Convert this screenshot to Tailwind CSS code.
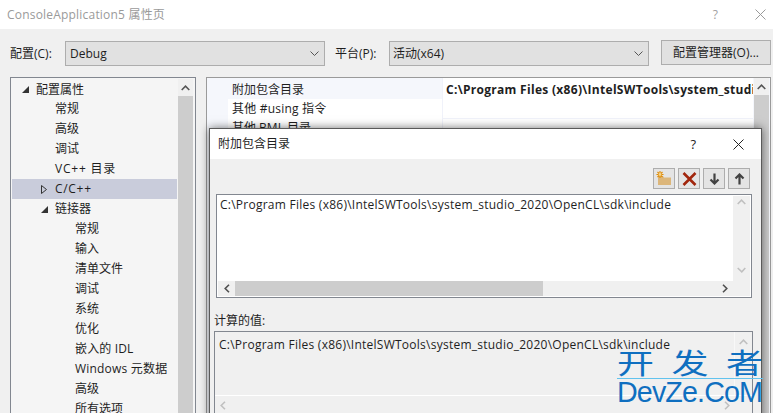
<!DOCTYPE html>
<html lang="zh">
<head>
<meta charset="utf-8">
<script src="https://cdn.jsdelivr.net/npm/@tailwindcss/browser@4"></script>
</head>
<body class="m-0">
<div class="relative w-[773px] h-[413px] overflow-hidden bg-[#f0f0f0] text-[12px] text-[#1e1e1e] font-['Open_Sans','Noto_Sans_CJK_SC',sans-serif]">

  <!-- title bar -->
  <div class="h-[29px] bg-white flex items-center justify-between pl-[7px] pr-[7px]">
    <span class="text-[#9a9a9a] text-[12px] leading-none tracking-[0.2px]">ConsoleApplication5 属性页</span>
    <div class="flex items-center gap-[37px]">
      <span class="text-[#a0a0a0] text-[12px] leading-none">?</span>
      <svg class="w-[11px] h-[11px]" viewBox="0 0 11 11"><path d="M.5 .5L10.5 10.5M10.5 .5L.5 10.5" stroke="#9a9a9a" stroke-width="1" fill="none"/></svg>
    </div>
  </div>

  <!-- config row -->
  <div class="h-[48px] flex items-start pt-[12px] pl-[10px]">
    <span class="w-[55px] leading-[25px]">配置(C):</span>
    <div class="w-[260px] h-[25px] border border-[#adadad] bg-[#e1e1e1] flex items-center justify-between pl-[4px] pr-[4px]">
      <span class="text-[12px]">Debug</span>
      <svg class="w-[9px] h-[6px] mr-[1px]" viewBox="0 0 9 6"><path d="M.5 .5L4.5 4.5L8.5 .5" stroke="#555" fill="none"/></svg>
    </div>
    <span class="w-[64px] pl-[10px] leading-[25px] box-border">平台(P):</span>
    <div class="w-[260px] h-[25px] border border-[#adadad] bg-[#e1e1e1] flex items-center justify-between pl-[3px] pr-[4px]">
      <span>活动(x64)</span>
      <svg class="w-[9px] h-[6px] mr-[1px]" viewBox="0 0 9 6"><path d="M.5 .5L4.5 4.5L8.5 .5" stroke="#555" fill="none"/></svg>
    </div>
    <div class="ml-[12px] -mt-[1px] w-[110px] h-[25px] border border-[#adadad] bg-[#e1e1e1] flex items-center justify-center">配置管理器(O)...</div>
  </div>

  <!-- panels -->
  <div class="flex items-start pl-[10px]">
    <!-- tree -->
    <div class="w-[186px] h-[340px] border border-[#828790] bg-[#f5f5f5] flex p-[1px] overflow-hidden">
      <div class="w-[165px] shrink-0 leading-[19px]">
        <div class="flex items-center h-[20px] pl-[10px] gap-[7px]">
          <svg class="w-[7px] h-[7px]" viewBox="0 0 7 7"><path d="M7 0V7H0Z" fill="#333"/></svg><span>配置属性</span>
        </div>
        <div class="h-[20px] pl-[43px]">常规</div>
        <div class="h-[20px] pl-[43px]">高级</div>
        <div class="h-[20px] pl-[43px]">调试</div>
        <div class="h-[20px] pl-[43px] tracking-[0.8px]">VC++ 目录</div>
        <div class="flex items-center h-[20px] pl-[29px] gap-[6px] bg-[#c9ccdb]">
          <svg class="w-[6px] h-[9px]" viewBox="0 0 6 9"><path d="M.5 .5L5.5 4.5L.5 8.5Z" fill="none" stroke="#333"/></svg><span class="ml-[2px] -mt-[2px] tracking-[0.7px]">C/C++</span>
        </div>
        <div class="flex items-center h-[20px] pl-[29px] gap-[7px]">
          <svg class="w-[7px] h-[7px]" viewBox="0 0 7 7"><path d="M7 0V7H0Z" fill="#333"/></svg><span class="-mt-[2px]">链接器</span>
        </div>
        <div class="h-[20px] pl-[63px]">常规</div>
        <div class="h-[20px] pl-[63px]">输入</div>
        <div class="h-[20px] pl-[63px]">清单文件</div>
        <div class="h-[20px] pl-[63px]">调试</div>
        <div class="h-[20px] pl-[63px]">系统</div>
        <div class="h-[20px] pl-[63px]">优化</div>
        <div class="h-[20px] pl-[63px] tracking-[0.15px]">嵌入的 IDL</div>
        <div class="h-[20px] pl-[63px] tracking-[0.2px]">Windows 元数据</div>
        <div class="h-[20px] pl-[63px]">高级</div>
        <div class="h-[20px] pl-[63px]">所有选项</div>
      </div>
      <div class="w-[15px] ml-[1px] shrink-0 flex flex-col">
        <div class="h-[17px] bg-[#f0f0f0] flex items-center justify-center">
          <svg class="w-[9px] h-[6px]" viewBox="0 0 9 6"><path d="M.7 5L4.5 1.2L8.3 5" stroke="#555" stroke-width="1.6" fill="none"/></svg>
        </div>
        <div class="flex-1 bg-[#cdcdcd]"></div>
      </div>
    </div>

    <!-- property grid -->
    <div class="ml-[10px] w-[565px] h-[340px] border border-[#9a9a9a] bg-[#f5f7fc] flex overflow-hidden">
      <div class="w-[21px] shrink-0"></div>
      <div class="w-[214px] shrink-0 leading-[19px]">
        <div class="h-[20px] pl-[4px] mt-[1px] leading-[22px]">附加包含目录</div>
        <div class="h-[19px] pl-[4px] bg-white leading-[20px] tracking-[0.2px]">其他 #using 指令</div>
        <div class="h-[19px] pl-[4px] bg-white">其他 BML 目录</div>
      </div>
      <div class="flex-1 border-l border-[#f0f2fa] min-w-0">
        <div class="h-[21px] bg-white font-bold leading-[23px] whitespace-nowrap overflow-hidden pl-[3px] text-[12px] tracking-[0.3px]">C:\Program Files (x86)\IntelSWTools\system_studio_2020\OpenCL\sdk\include</div>
        <div class="h-[19px] bg-white"></div>
        <div class="h-[19px] bg-white border-t border-[#f0f2fa]"></div>
      </div>
      <div class="w-[15px] ml-[1px] mr-[1px] shrink-0 flex flex-col">
        <div class="h-[17px] bg-[#f0f0f0] flex items-center justify-center">
          <svg class="w-[9px] h-[6px]" viewBox="0 0 9 6"><path d="M.7 5L4.5 1.2L8.3 5" stroke="#555" stroke-width="1.6" fill="none"/></svg>
        </div>
        <div class="flex-1 bg-[#cdcdcd]"></div>
      </div>
    </div>
  </div>

  <!-- dialog -->
  <div class="absolute left-[209px] top-[128px] w-[553px] h-[300px] border border-[#5a5a5a] bg-[#f0f0f0] shadow-[0_0_9px_rgba(0,0,0,0.55)]">
    <div class="h-[30px] bg-white flex items-center justify-between pl-[8px] pr-[17px]">
      <span>附加包含目录</span>
      <div class="flex items-center gap-[37px]">
        <span class="text-[13px] leading-none text-[#222]">?</span>
        <svg class="w-[11px] h-[11px]" viewBox="0 0 11 11"><path d="M.5 .5L10.5 10.5M10.5 .5L.5 10.5" stroke="#222" fill="none"/></svg>
      </div>
    </div>

    <!-- toolbar -->
    <div class="flex justify-end gap-[3px] pt-[9px] pr-[11px] h-[35px]">
      <div class="w-[22px] h-[21px] border border-[#adadad] bg-[#e4e4e4] flex items-center justify-center">
        <svg class="w-[16px] h-[15px]" viewBox="0 0 16 15">
          <path d="M2 5H7L8 6.5H15V14H2Z" fill="#dcb67a"/>
          <path d="M4 0V7M.5 3.5H7.5M1.5 1L6.5 6M6.5 1L1.5 6" stroke="#e08a00" stroke-width="1.1"/>
          <circle cx="4" cy="3.5" r="1.4" fill="#f5d58a"/>
        </svg>
      </div>
      <div class="w-[22px] h-[21px] border border-[#adadad] bg-[#e4e4e4] flex items-center justify-center">
        <svg class="w-[15px] h-[14px]" viewBox="0 0 15 14"><path d="M1.5 1L13.5 13M13.5 1L1.5 13" stroke="#a1260d" stroke-width="2.6" fill="none"/></svg>
      </div>
      <div class="w-[22px] h-[21px] border border-[#adadad] bg-[#e4e4e4] flex items-center justify-center">
        <svg class="w-[11px] h-[12px]" viewBox="0 0 11 12"><path d="M5.5 .5V10M1.5 6.5L5.5 10.5L9.5 6.5" stroke="#424242" stroke-width="2.2" fill="none"/></svg>
      </div>
      <div class="w-[22px] h-[21px] border border-[#adadad] bg-[#e4e4e4] flex items-center justify-center">
        <svg class="w-[11px] h-[12px]" viewBox="0 0 11 12"><path d="M5.5 11.5V2M1.5 5.5L5.5 1.5L9.5 5.5" stroke="#424242" stroke-width="2.2" fill="none"/></svg>
      </div>
    </div>

    <!-- edit box -->
    <div class="ml-[6px] w-[536px] h-[104px] border border-[#828790] bg-white flex flex-col p-[1px]">
      <div class="flex flex-1 min-h-0">
        <div class="flex-1 pl-[2px] leading-[17px] whitespace-nowrap overflow-hidden tracking-[0.25px]">C:\Program Files (x86)\IntelSWTools\system_studio_2020\OpenCL\sdk\include</div>
        <div class="w-[17px] bg-[#f0f0f0] flex flex-col justify-between items-center py-[3px]">
          <svg class="w-[9px] h-[6px]" viewBox="0 0 9 6"><path d="M.7 5L4.5 1.2L8.3 5" stroke="#c0c0c0" stroke-width="1.6" fill="none"/></svg>
          <svg class="w-[9px] h-[6px] mb-[5px]" viewBox="0 0 9 6"><path d="M.7 1L4.8 4.8L8.3 1" stroke="#c0c0c0" stroke-width="1.6" fill="none"/></svg>
        </div>
      </div>
      <div class="h-[15px] flex bg-[#f0f0f0]">
        <div class="w-[17px] flex items-center justify-center">
          <svg class="w-[6px] h-[9px]" viewBox="0 0 6 9"><path d="M5 .7L1.2 4.5L5 8.3" stroke="#505050" stroke-width="1.6" fill="none"/></svg>
        </div>
        <div class="w-[308px] bg-[#cdcdcd]"></div>
        <div class="flex-1 flex items-center justify-end pr-[22px]">
          <svg class="w-[6px] h-[9px]" viewBox="0 0 6 9"><path d="M1 .7L4.8 4.5L1 8.3" stroke="#505050" stroke-width="1.6" fill="none"/></svg>
        </div>
      </div>
    </div>

    <div class="ml-[4px] mt-[14px] leading-[18px]">计算的值:</div>

    <!-- computed box -->
    <div class="ml-[4px] mt-[1px] w-[539px] h-[120px] border border-[#828790] bg-[#f0f0f0] flex flex-col">
      <div class="h-[63px] flex">
        <div class="flex-1 pl-[4px] pt-[4px] leading-[18px] whitespace-nowrap overflow-hidden tracking-[0.25px]">C:\Program Files (x86)\IntelSWTools\system_studio_2020\OpenCL\sdk\include</div>
        <div class="w-[18px] border-l border-[#f8f8f8] flex justify-center pt-[7px]">
          <svg class="w-[9px] h-[6px]" viewBox="0 0 9 6"><path d="M.7 5L4.5 1.2L8.3 5" stroke="#c0c0c0" stroke-width="1.6" fill="none"/></svg>
        </div>
      </div>
      <div class="border-t border-white h-[20px] flex items-center justify-between pl-[5px] pr-[22px]">
        <svg class="w-[6px] h-[9px]" viewBox="0 0 6 9"><path d="M5 .7L1.2 4.5L5 8.3" stroke="#c0c0c0" stroke-width="1.6" fill="none"/></svg>
        <svg class="w-[6px] h-[9px]" viewBox="0 0 6 9"><path d="M1 .7L4.8 4.5L1 8.3" stroke="#c0c0c0" stroke-width="1.6" fill="none"/></svg>
      </div>
    </div>
  </div>

  <!-- watermark -->
  <div class="absolute left-[617px] top-[347px] w-[146px] text-[#0f6fc0] pointer-events-none">
    <div class="flex justify-between h-[31px] text-[37px] leading-[37px] origin-top scale-y-[0.78] font-['Noto_Sans_CJK_SC',sans-serif]"><span>开</span><span>发</span><span>者</span></div>
    <div class="h-[1px] bg-[#62c3ee]"></div>
    <div class="text-[30px] leading-[25px] font-['Liberation_Sans',sans-serif] whitespace-nowrap tracking-[-0.9px] origin-left scale-x-[0.955]">DevZe.CoM</div>
  </div>
</div>
</body>
</html>
